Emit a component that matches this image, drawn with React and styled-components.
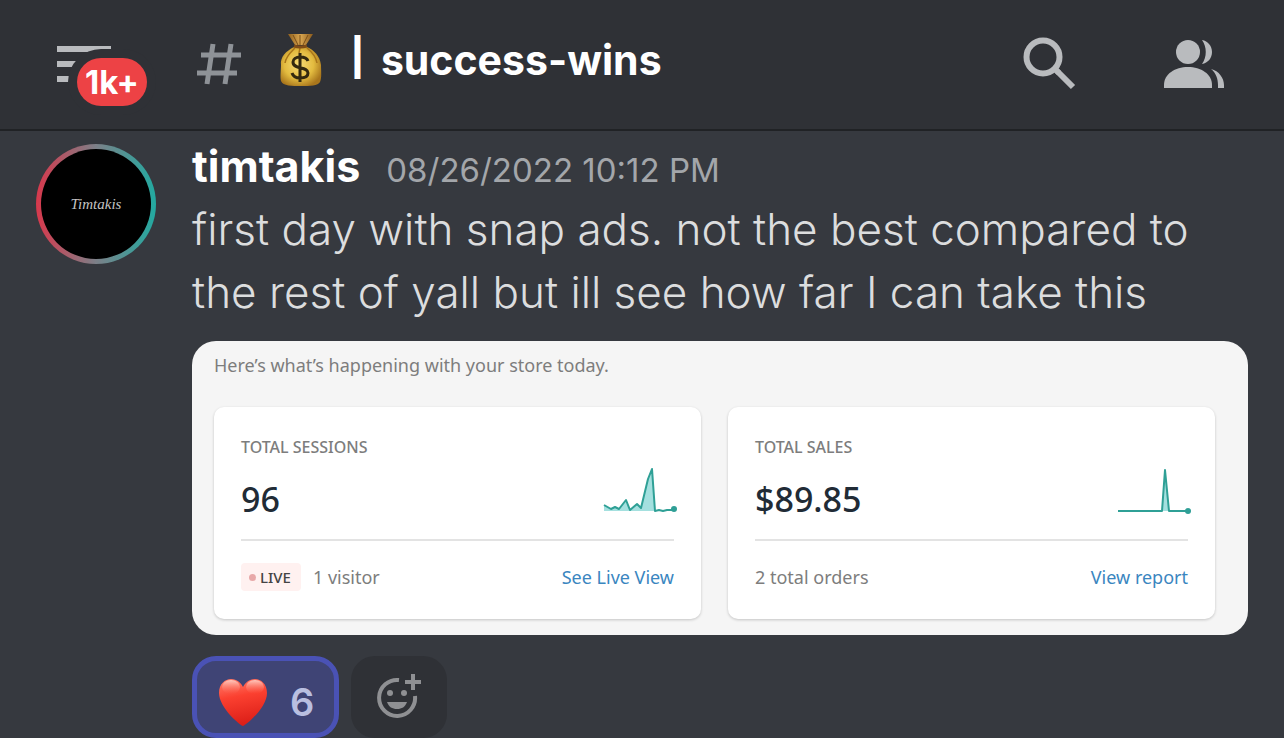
import React from 'react';
import styled, { createGlobalStyle } from 'styled-components';

const GlobalStyle = createGlobalStyle`
  :root {
    --header: #2f3136;
    --chat: #36393f;
    --icon: #b9bbbe;
    --ui: Inter, sans-serif;
    --store: "Noto Sans", sans-serif;
  }

  * {
    box-sizing: border-box;
  }

  body {
    margin: 0;
    background: var(--chat);
    font-family: var(--ui);
  }

  button {
    padding: 0;
    border: 0;
    background: none;
    font: inherit;
    cursor: pointer;
  }
`;

const stores = [
  {
    label: 'Total sessions',
    value: '96',
    live: true,
    note: '1 visitor',
    link: 'See Live View',
    line: '0,39 7,43 11,41 15,43 22,34 26,44 33,38 37,42 44,13 48,3 51,45 55,44 59,45 63,44 69,44',
    dot: 43
  },
  {
    label: 'Total sales',
    value: '$89.85',
    live: false,
    note: '2 total orders',
    link: 'View report',
    line: '0,45 44,45 47,4 51,45 69,45',
    dot: 45
  }
];

const HashIcon = () => (
  <svg width="46" height="42" viewBox="0 0 46 42" stroke="#8e9297" strokeWidth="5" aria-hidden="true">
    <path d="M16 1L10 41M34 1L28 41M4 12H44M0 30H40" />
  </svg>
);

const SearchIcon = () => (
  <svg width="54" height="54" viewBox="0 0 54 54" fill="none" stroke="#b9bbbe" strokeWidth="6" aria-hidden="true">
    <circle cx="21" cy="20" r="16.5" />
    <path d="M34 33L51 50" />
    <path d="M34 37L38 33" strokeWidth="3" />
  </svg>
);

const MembersIcon = () => (
  <svg width="60" height="48" viewBox="0 0 60 48" fill="#b9bbbe" aria-hidden="true">
    <circle cx="24" cy="12" r="12" />
    <path d="M38 0C44 1 48 6 48 12S44 23 38 24C43 17 43 7 38 0Z" />
    <path d="M0 48V45C0 34 11 27 24 27S48 34 48 45V48Z" />
    <path d="M47 29C55 31 60 38 60 45V48H54V45C54 39 52 33 47 29Z" />
  </svg>
);

const MoneyBag = () => (
  <svg width="42" height="52" viewBox="0 0 42 52" role="img" aria-label="money bag">
    <defs>
      <radialGradient id="bag" cx="45%" cy="45%" r="60%">
        <stop offset="0" stopColor="#f7dc76" />
        <stop offset="0.6" stopColor="#e3bb3f" />
        <stop offset="1" stopColor="#a9761c" />
      </radialGradient>
      <linearGradient id="neck" x1="0" x2="1">
        <stop offset="0" stopColor="#8f5f1d" />
        <stop offset="0.5" stopColor="#d9a650" />
        <stop offset="1" stopColor="#8a5a1c" />
      </linearGradient>
    </defs>
    <path d="M8 0H33L26 11H15Z" fill="url(#neck)" />
    <path d="M13 1L18 11M20 1V11M28 1L23 11" stroke="#7b4e17" strokeWidth="1" />
    <path d="M14 13C6 17 0 23 1 31C1 36 0 43 1 47C3 52 12 52 21 52S38 52 40 48C42 44 41 36 41 31C40 22 34 16 27 13Z" fill="url(#bag)" />
    <path d="M15 14C11 18 6 22 5 29M27 14C32 18 36 23 37 29M20 14L19 19" fill="none" stroke="#a87418" strokeWidth="1.5" />
    <path d="M14 12Q20 14 27 12" fill="none" stroke="#7f4c17" strokeWidth="3" />
    <path d="M28 27C27 24 24 23 20 23C16 23 13 25 13 28C13 36 28 32 28 39C28 42 25 44 20 44C16 44 13 42 12 39M20 19V48" fill="none" stroke="#33290f" strokeWidth="3" />
  </svg>
);

const Heart = () => (
  <svg width="50" height="48" viewBox="0 0 50 48" role="img" aria-label="heart">
    <defs>
      <linearGradient id="heart" x1="0.4" y1="0" x2="0.6" y2="1">
        <stop offset="0" stopColor="#ff7664" />
        <stop offset="0.35" stopColor="#fb4030" />
        <stop offset="1" stopColor="#d91c16" />
      </linearGradient>
      <linearGradient id="shine" x1="0" y1="0" x2="0" y2="1">
        <stop offset="0" stopColor="#ffd3c9" stopOpacity="0.9" />
        <stop offset="1" stopColor="#ff6a58" stopOpacity="0" />
      </linearGradient>
    </defs>
    <path d="M25 48C23 48 1 30 1 15C1 6 7 1 13 1C19 1 23 5 25 9C27 5 31 1 37 1C43 1 49 6 49 15C49 30 27 48 25 48Z" fill="url(#heart)" />
    <ellipse cx="13" cy="9" rx="9" ry="7" fill="url(#shine)" />
    <ellipse cx="37" cy="9" rx="9" ry="7" fill="url(#shine)" />
  </svg>
);

const AddReactionIcon = () => (
  <svg width="44" height="46" viewBox="0 0 44 46" aria-hidden="true">
    <path d="M22 6A18 18 0 1 0 38 22" fill="none" stroke="#8f9093" strokeWidth="4" />
    <path d="M28 8H44M36 0V16" stroke="#8f9093" strokeWidth="4" />
    <g fill="#8f9093">
      <circle cx="13" cy="19" r="3" />
      <circle cx="27" cy="19" r="3" />
      <path d="M10 28H30C28 33 25 35 20 35S12 33 10 28Z" />
    </g>
  </svg>
);

const Sparkline = ({ line, dot }) => (
  <ChartSvg width="70" height="48" viewBox="0 0 70 48" aria-hidden="true">
    <polygon points={`0,45 ${line} 69,45`} fill="#a4e0df" />
    <polyline points={line} fill="none" stroke="#2fa096" strokeWidth="2" strokeLinejoin="round" />
    <circle cx="70" cy={dot} r="3" fill="#2f9f96" />
  </ChartSvg>
);

const StoreCard = ({ store }) => (
  <Card>
    <CardLabel>{store.label}</CardLabel>
    <CardMain>
      <CardValue>{store.value}</CardValue>
      <Sparkline line={store.line} dot={store.dot} />
    </CardMain>
    <CardFooter>
      {store.live && <LiveBadge>Live</LiveBadge>}
      <span>{store.note}</span>
      <CardLink href="#report">{store.link}</CardLink>
    </CardFooter>
  </Card>
);

export default function App() {
  return (
    <>
      <GlobalStyle />
      <Header>
        <MenuButton type="button" aria-label="Open channel list">
          <MenuLine />
          <MenuLine $short />
          <MenuLine $short />
          <UnreadBadge>1k+</UnreadBadge>
        </MenuButton>
        <HashIcon />
        <ChannelTitle>
          <MoneyBag />
          <Divider>|</Divider>
          <span>success-wins</span>
        </ChannelTitle>
        <HeaderActions>
          <button type="button" aria-label="Search">
            <SearchIcon />
          </button>
          <button type="button" aria-label="Members">
            <MembersIcon />
          </button>
        </HeaderActions>
      </Header>
      <Message>
        <Avatar>
          <Signature>Timtakis</Signature>
        </Avatar>
        <MessageContent>
          <MessageHeader>
            <Username>timtakis</Username>
            <Timestamp>08/26/2022 10:12 PM</Timestamp>
          </MessageHeader>
          <MessageText>
            first day with snap ads. not the best compared to the rest of yall but ill see how far I can take this
          </MessageText>
          <Attachment>
            <Greeting>Here’s what’s happening with your store today.</Greeting>
            <CardGrid>
              {stores.map(store => (
                <StoreCard key={store.label} store={store} />
              ))}
            </CardGrid>
          </Attachment>
          <Reactions>
            <Reaction type="button" $active>
              <Heart />
              <span>6</span>
            </Reaction>
            <Reaction type="button" aria-label="Add reaction">
              <AddReactionIcon />
            </Reaction>
          </Reactions>
        </MessageContent>
      </Message>
    </>
  );
}

const Header = styled.header`
  display: flex;
  align-items: center;
  height: 131px;
  padding: 0 60px 1px 57px;
  background: var(--header);
  border-bottom: 2px solid #202225;
`;

const MenuButton = styled.button`
  position: relative;
  display: flex;
  flex-direction: column;
  gap: 9px;
  width: 54px;
  margin-right: 86px;
`;

const MenuLine = styled.span`
  width: ${props => (props.$short ? '20px' : '54px')};
  height: 6px;
  background: var(--icon);
`;

const UnreadBadge = styled.span`
  position: absolute;
  top: 12px;
  left: 20px;
  width: 70px;
  height: 48px;
  border-radius: 24px;
  background: #ed4245;
  box-shadow: 0 0 0 9px var(--header);
  color: white;
  font-size: 33px;
  font-weight: 700;
  line-height: 48px;
  text-align: center;
`;

const ChannelTitle = styled.h1`
  display: flex;
  align-items: center;
  margin: 0 0 8px 37px;
  color: white;
  font-size: 41px;
  font-weight: 700;
  line-height: 54px;
`;

const Divider = styled.span`
  align-self: flex-start;
  margin: 0 17px 0 29px;
  font-family: "Liberation Sans", sans-serif;
  font-size: 46px;
  line-height: 40px;
`;

const HeaderActions = styled.div`
  display: flex;
  align-items: center;
  gap: 88px;
  margin-left: auto;

  button {
    display: flex;
  }
`;

const Message = styled.article`
  display: grid;
  grid-template-columns: 120px 1fr;
  gap: 36px;
  padding: 13px 36px 0;
`;

const Avatar = styled.div`
  display: grid;
  place-items: center;
  width: 120px;
  height: 120px;
  border: 5px solid transparent;
  border-radius: 50%;
  background: linear-gradient(black, black) padding-box,
    linear-gradient(90deg, #d8384c, #7c8088 50%, #22aaa1) border-box;
`;

const Signature = styled.span`
  color: #c4c4c4;
  font-family: "Liberation Serif", serif;
  font-size: 15px;
  font-style: italic;
`;

const MessageContent = styled.div`
  min-width: 0;
`;

const MessageHeader = styled.div`
  display: flex;
  align-items: baseline;
  gap: 26px;
  height: 54px;
  line-height: 44px;
`;

const Username = styled.strong`
  color: white;
  font-size: 43px;
`;

const Timestamp = styled.time`
  color: #a3a6aa;
  font-size: 33px;
`;

const MessageText = styled.p`
  margin: 0 0 17px;
  color: #dcddde;
  font-size: 44px;
  font-weight: 300;
  line-height: 63px;
`;

const Attachment = styled.section`
  padding: 10px 33px 16px 22px;
  border-radius: 24px;
  background: #f5f5f5;
  color: #7d7d7d;
  font-family: var(--store);
  font-size: 18px;
  line-height: 28px;
`;

const Greeting = styled.p`
  margin: 0 0 28px;
`;

const CardGrid = styled.div`
  display: grid;
  grid-template-columns: 1fr 1fr;
  gap: 27px;
`;

const Card = styled.div`
  padding: 28px 27px;
  border-radius: 10px;
  background: white;
  box-shadow: 0 1px 3px rgba(0, 0, 0, 0.2);
`;

const CardLabel = styled.h2`
  margin: 0;
  font-size: 16px;
  font-weight: 500;
  line-height: 24px;
  text-transform: uppercase;
`;

const CardMain = styled.div`
  display: flex;
  justify-content: space-between;
  align-items: center;
  height: 82px;
  border-bottom: 2px solid #e3e3e3;
`;

const CardValue = styled.span`
  color: #212b36;
  font-size: 34px;
  font-weight: 500;
`;

const ChartSvg = styled.svg`
  margin-bottom: 18px;
  overflow: visible;
`;

const CardFooter = styled.div`
  display: flex;
  align-items: center;
  gap: 12px;
  padding-top: 22px;
`;

const LiveBadge = styled.span`
  display: flex;
  align-items: center;
  gap: 4px;
  padding: 0 10px 0 8px;
  border-radius: 4px;
  background: #fff1f0;
  color: #444444;
  font-size: 15px;
  font-weight: 500;
  text-transform: uppercase;

  &::before {
    content: '';
    width: 7px;
    height: 7px;
    border-radius: 50%;
    background: #e8a8a8;
  }
`;

const CardLink = styled.a`
  margin-left: auto;
  color: #3a86bf;
  text-decoration: none;
`;

const Reactions = styled.div`
  display: flex;
  gap: 12px;
  margin-top: 21px;
`;

const Reaction = styled.button`
  && {
    display: flex;
    justify-content: center;
    align-items: center;
    gap: 22px;
    height: 82px;
    padding: ${props => (props.$active ? '10px 20px 0 21px' : '0 26px')};
    border: ${props => (props.$active ? '5px solid #4a52b5' : '0')};
    border-radius: 24px;
    background: ${props => (props.$active ? '#3f4475' : 'var(--header)')};
    color: #b9bfe0;
    font-size: 38px;
    font-weight: 600;
  }
`;
